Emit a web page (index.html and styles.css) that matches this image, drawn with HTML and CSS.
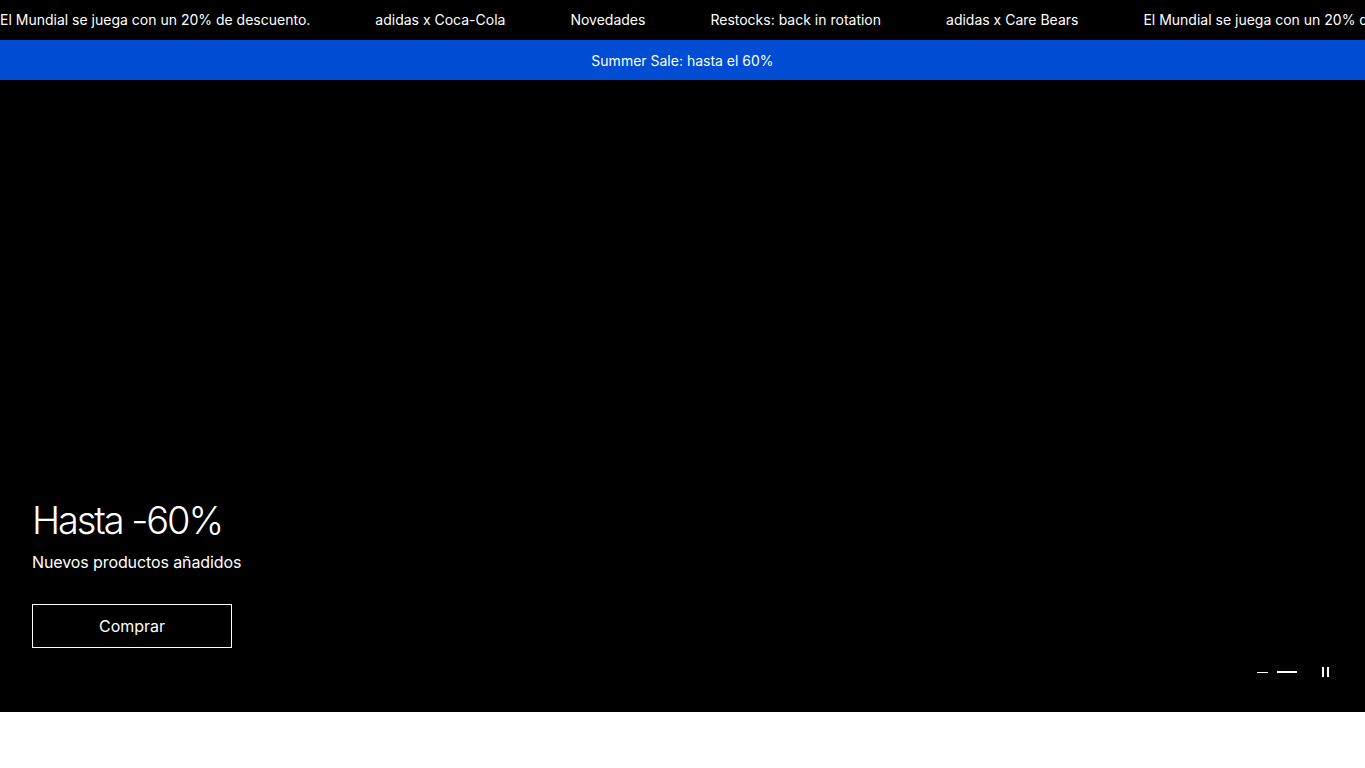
FILE: index.html
```html
<!DOCTYPE html>
<html lang="es">
<head>
<meta charset="utf-8">
<title>adidas</title>
<link rel="stylesheet" href="styles.css">
</head>
<body>
<div class="ticker">
  <div class="ticker-track">
    <span class="ticker-item">El Mundial se juega con un 20% de descuento.</span>
    <span class="ticker-item">adidas x Coca-Cola</span>
    <span class="ticker-item">Novedades</span>
    <span class="ticker-item">Restocks: back in rotation</span>
    <span class="ticker-item">adidas x Care Bears</span>
    <span class="ticker-item">El Mundial se juega con un 20% de descuento.</span>
  </div>
</div>
<div class="promo">Summer Sale: hasta el 60%</div>
<section class="hero">
  <div class="hero-content">
    <h1 class="hero-title">Hasta -60%</h1>
    <p class="hero-sub">Nuevos productos añadidos</p>
    <a class="hero-btn" href="#">Comprar</a>
  </div>
  <div class="hero-controls">
    <span class="dot"></span>
    <span class="dot active"></span>
    <button class="pause" aria-label="Pausa"><span></span><span></span></button>
  </div>
</section>
<div class="after"></div>
</body>
</html>
```
FILE: styles.css
```css
* { box-sizing: border-box; }
html, body { margin: 0; padding: 0; }
body {
  font-family: Inter, "Noto Sans", "Liberation Sans", sans-serif;
  background: #fff;
  color: #fff;
}
.ticker {
  height: 40px;
  background: #000;
  overflow: hidden;
  white-space: nowrap;
}
.ticker-track {
  display: flex;
  height: 40px;
  align-items: center;
  gap: 65px;
}
.ticker-item {
  font-size: 14px;
  line-height: 20px;
  flex: none;
}
.promo {
  height: 40px;
  background: #004cd3;
  display: flex;
  align-items: center;
  justify-content: center;
  font-size: 14px;
}
.hero {
  position: relative;
  height: 632px;
  background: #000;
  display: flex;
  flex-direction: column;
  justify-content: flex-end;
  padding: 0 32px 64px;
}
.hero-title {
  margin: 0 0 7px;
  font-size: 38px;
  font-weight: 300;
  line-height: 46px;
  letter-spacing: -2.1px;
}
.hero-sub {
  margin: 0 0 30px;
  font-size: 16px;
  line-height: 24px;
  letter-spacing: -0.1px;
}
.hero-btn {
  display: flex;
  align-items: center;
  justify-content: center;
  width: 200px;
  height: 44px;
  border: 1px solid #fff;
  color: #fff;
  text-decoration: none;
  font-size: 16px;
}
.hero-controls {
  position: absolute;
  right: 36px;
  bottom: 33px;
  display: flex;
  align-items: center;
  height: 14px;
}
.dot {
  display: block;
  width: 11px;
  height: 1px;
  background: #fff;
  margin-right: 9px;
}
.dot.active {
  width: 20px;
  height: 2px;
  margin-right: 25px;
}
.pause {
  display: flex;
  gap: 3px;
  padding: 0;
  border: 0;
  background: none;
  height: 10px;
}
.pause span {
  display: block;
  width: 2px;
  height: 10px;
  background: #fff;
}
.after { height: 56px; background: #fff; }
```
